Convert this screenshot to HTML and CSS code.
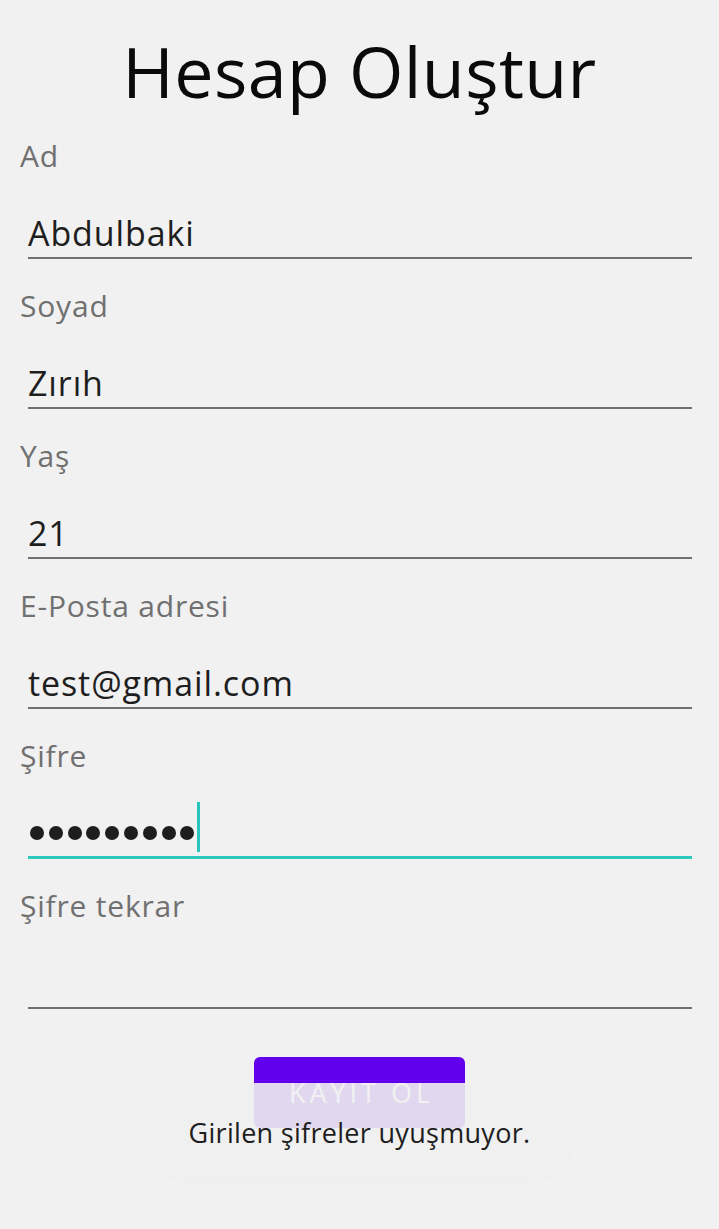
FILE: index.html
```html
<!DOCTYPE html>
<html lang="tr">
<head>
<meta charset="utf-8">
<title>Hesap Oluştur</title>
<link rel="stylesheet" href="styles.css">
</head>
<body>
<main class="screen">
  <h1 class="title">Hesap Oluştur</h1>
  <form class="form">
    <div class="field">
      <div class="label">Ad</div>
      <div class="input"><span class="value">Abdulbaki</span></div>
    </div>
    <div class="field">
      <div class="label">Soyad</div>
      <div class="input"><span class="value">Zırıh</span></div>
    </div>
    <div class="field">
      <div class="label">Yaş</div>
      <div class="input"><span class="value">21</span></div>
    </div>
    <div class="field">
      <div class="label">E-Posta adresi</div>
      <div class="input"><span class="value">test@gmail.com</span></div>
    </div>
    <div class="field">
      <div class="label">Şifre</div>
      <div class="input input-focused">
        <span class="dots"><i></i><i></i><i></i><i></i><i></i><i></i><i></i><i></i><i></i></span><span class="caret"></span>
      </div>
    </div>
    <div class="field">
      <div class="label">Şifre tekrar</div>
      <div class="input"><span class="value"></span></div>
    </div>
    <div class="actions">
      <button type="button" class="btn">KAYIT OL</button>
    </div>
  </form>
  <div class="toast">Girilen şifreler uyuşmuyor.</div>
</main>
</body>
</html>
```
FILE: styles.css
```css
html, body {
  margin: 0;
  padding: 0;
  background: #f1f1f1;
}
body {
  font-family: "Open Sans", "Noto Sans", sans-serif;
}
.screen {
  position: relative;
  width: 719px;
  height: 1229px;
  overflow: hidden;
}
.title {
  margin: 0;
  padding-top: 26px;
  height: 100px;
  font-size: 70px;
  font-weight: 400;
  line-height: 90px;
  letter-spacing: 0.4px;
  text-align: center;
  color: #0a0a0a;
}
.form {
  display: flex;
  flex-direction: column;
  padding-top: 10px;
}
.field {
  height: 150px;
  display: flex;
  flex-direction: column;
}
.label {
  padding-left: 20px;
  font-size: 30px;
  letter-spacing: 0.8px;
  line-height: 40px;
  height: 40px;
  color: #707070;
}
.input {
  margin: 33px 27px 0 28px;
  height: 48px;
  border-bottom: 2px solid #707070;
  display: flex;
  align-items: center;
  font-size: 34px;
  font-weight: 500;
  letter-spacing: 0.9px;
  color: #1e1e1e;
}
.value {
  line-height: 44px;
}
.input-focused {
  border-bottom: 3px solid #2cc9be;
  height: 47px;
}
.dots {
  display: flex;
  gap: 4.8px;
  padding-left: 2px;
}
.dots i {
  display: block;
  width: 14px;
  height: 14px;
  border-radius: 50%;
  background: #1e1e1e;
}
.caret {
  display: block;
  width: 3px;
  height: 50px;
  margin-left: 3px;
  background: #26c6bc;
  align-self: flex-end;
  margin-bottom: 4px;
}
.actions {
  display: flex;
  justify-content: center;
  padding-top: 21px;
}
.btn {
  width: 211px;
  height: 71px;
  border: none;
  border-radius: 6px;
  background: #6200ee;
  color: #fff;
  font-family: "Open Sans", "Noto Sans", sans-serif;
  font-size: 27px;
  letter-spacing: 4px;
  padding: 0 0 0 4px;
}
.toast {
  position: absolute;
  left: 143px;
  top: 1083px;
  width: 433px;
  height: 99px;
  border-radius: 50px;
  background: rgba(240, 240, 240, 0.9);
  box-shadow: 0 1px 3px rgba(0, 0, 0, 0.02);
  display: flex;
  align-items: center;
  justify-content: center;
  font-size: 27px;
  letter-spacing: 0.3px;
  color: #1e1e1e;
}
```
